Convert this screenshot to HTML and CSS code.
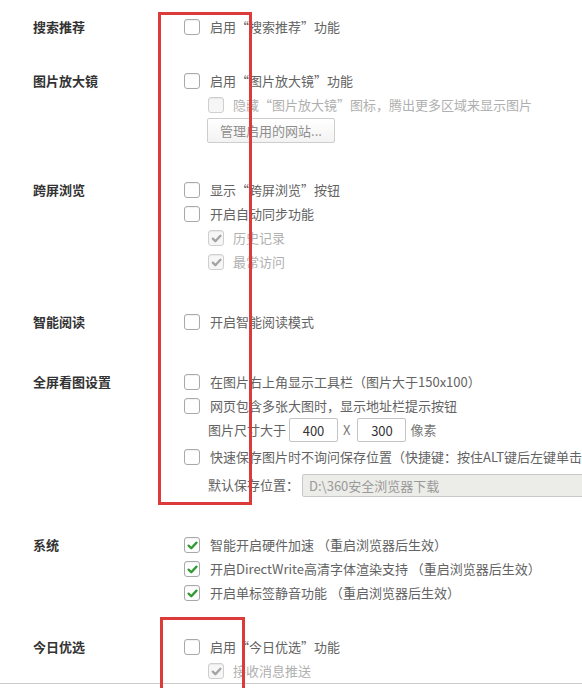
FILE: index.html
```html
<!DOCTYPE html>
<html lang="zh-CN">
<head>
<meta charset="utf-8">
<title>设置</title>
<link rel="stylesheet" href="styles.css">
</head>
<body>
<div class="page">
  <section class="sec s1">
    <div class="label">搜索推荐</div>
    <div class="opts">
      <div class="row"><span class="cb"></span><span class="txt">启用“搜索推荐”功能</span></div>
    </div>
  </section>

  <section class="sec s2">
    <div class="label">图片放大镜</div>
    <div class="opts">
      <div class="row"><span class="cb"></span><span class="txt">启用“图片放大镜”功能</span></div>
      <div class="row sub"><span class="cb dis"></span><span class="txt dim">隐藏“图片放大镜”图标，腾出更多区域来显示图片</span></div>
      <div class="btnrow"><button class="btn" type="button">管理启用的网站...</button></div>
    </div>
  </section>

  <section class="sec s3">
    <div class="label">跨屏浏览</div>
    <div class="opts">
      <div class="row"><span class="cb"></span><span class="txt">显示“跨屏浏览”按钮</span></div>
      <div class="row"><span class="cb"></span><span class="txt">开启自动同步功能</span></div>
      <div class="row sub"><span class="cb dis"><svg viewBox="0 0 15 15"><path class="ck grey" d="M3.8 7.6 L6.4 10.2 L11.4 4.8"/></svg></span><span class="txt dim">历史记录</span></div>
      <div class="row sub"><span class="cb dis"><svg viewBox="0 0 15 15"><path class="ck grey" d="M3.8 7.6 L6.4 10.2 L11.4 4.8"/></svg></span><span class="txt dim">最常访问</span></div>
    </div>
  </section>

  <section class="sec s4">
    <div class="label">智能阅读</div>
    <div class="opts">
      <div class="row"><span class="cb"></span><span class="txt">开启智能阅读模式</span></div>
    </div>
  </section>

  <section class="sec s5">
    <div class="label">全屏看图设置</div>
    <div class="opts">
      <div class="row"><span class="cb"></span><span class="txt">在图片右上角显示工具栏（图片大于150x100）</span></div>
      <div class="row"><span class="cb"></span><span class="txt">网页包含多张大图时，显示地址栏提示按钮</span></div>
      <div class="row field sub-text">
        <span class="txt">图片尺寸大于</span>
        <input class="num" type="text" value="400">
        <span class="txt times">X</span>
        <input class="num" type="text" value="300">
        <span class="txt unit">像素</span>
      </div>
      <div class="row gap3"><span class="cb"></span><span class="txt">快速保存图片时不询问保存位置（快捷键：按住ALT键后左键单击图片）</span></div>
      <div class="row field gap4 sub-text">
        <span class="txt">默认保存位置：</span>
        <input class="path" type="text" value="D:\360安全浏览器下载" disabled>
      </div>
    </div>
  </section>

  <section class="sec s6">
    <div class="label">系统</div>
    <div class="opts">
      <div class="row"><span class="cb"><svg viewBox="0 0 15 15"><path class="ck green" d="M3.6 7.6 L6.3 10.3 L11.5 4.6"/></svg></span><span class="txt">智能开启硬件加速 （重启浏览器后生效）</span></div>
      <div class="row"><span class="cb"><svg viewBox="0 0 15 15"><path class="ck green" d="M3.6 7.6 L6.3 10.3 L11.5 4.6"/></svg></span><span class="txt">开启DirectWrite高清字体渲染支持 （重启浏览器后生效）</span></div>
      <div class="row"><span class="cb"><svg viewBox="0 0 15 15"><path class="ck green" d="M3.6 7.6 L6.3 10.3 L11.5 4.6"/></svg></span><span class="txt">开启单标签静音功能 （重启浏览器后生效）</span></div>
    </div>
  </section>

  <section class="sec s7">
    <div class="label">今日优选</div>
    <div class="opts">
      <div class="row"><span class="cb"></span><span class="txt">启用“今日优选”功能</span></div>
      <div class="row sub"><span class="cb dis"><svg viewBox="0 0 15 15"><path class="ck grey" d="M3.8 7.6 L6.4 10.2 L11.4 4.8"/></svg></span><span class="txt dim">接收消息推送</span></div>
    </div>
  </section>

  <div class="rule"></div>

  <div class="mark mark1"></div>
  <div class="mark mark2"></div>
</div>
</body>
</html>
```

FILE: styles.css
```css
html, body {
  margin: 0;
  padding: 0;
  background: #ffffff;
}

body {
  font-family: "Noto Sans CJK SC", "Microsoft YaHei", "Noto Sans", sans-serif;
  font-size: 13px;
  color: #636363;
  overflow: hidden;
}

.page {
  position: relative;
  width: 582px;
  height: 688px;
  overflow: hidden;
}

.sec {
  display: grid;
  grid-template-columns: 151px auto;
  padding-left: 33px;
}

.s1 { padding-top: 15px; }
.s2 { margin-top: 30px; }
.s3 { margin-top: 35px; }
.s4 { margin-top: 36px; }
.s5 { margin-top: 36px; }
.s6 { margin-top: 36px; }
.s7 { margin-top: 30px; }

.label {
  font-weight: bold;
  color: #333333;
  line-height: 24px;
  height: 24px;
  white-space: nowrap;
}

.opts {
  display: flex;
  flex-direction: column;
}

.row {
  display: flex;
  align-items: center;
  height: 24px;
  white-space: nowrap;
}

.row.sub {
  padding-left: 24px;
}

.row.sub-text {
  padding-left: 24px;
}

.row.gap3 { margin-top: 3px; }
.row.gap4 { margin-top: 4px; }

.cb {
  flex: none;
  box-sizing: border-box;
  width: 16px;
  height: 16px;
  border: 1px solid #a9a9a9;
  border-radius: 3px;
  background: #ffffff;
  box-shadow: inset 0 1px 1px rgba(0, 0, 0, 0.06);
  margin-right: 10px;
  display: flex;
  align-items: center;
  justify-content: center;
}

.cb.dis {
  border-color: #cfcfcf;
  background: #f6f6f6;
  margin-right: 9px;
}

.cb svg {
  width: 15px;
  height: 15px;
  flex: none;
}

.ck {
  fill: none;
  stroke-width: 2.3;
  stroke-linecap: round;
  stroke-linejoin: round;
}

.ck.green { stroke: #2e9c33; }
.ck.grey { stroke: #a3a3a3; }

.txt {
  line-height: 24px;
}

.txt.dim {
  color: #b0b0b0;
}

.btnrow {
  margin-top: 1px;
  padding-left: 23px;
}

.btn {
  box-sizing: border-box;
  height: 25px;
  width: 128px;
  padding: 0;
  border: 1px solid #cdcdcd;
  border-radius: 2px;
  background: linear-gradient(#ffffff, #f3f3f3);
  font-family: inherit;
  font-size: 13px;
  color: #8e8e8e;
  text-align: center;
}

.num {
  box-sizing: border-box;
  width: 49px;
  height: 24px;
  margin-left: 3px;
  padding: 0;
  border: 1px solid #c4c4c4;
  border-radius: 2px;
  font-family: inherit;
  font-size: 13px;
  color: #333333;
  text-align: center;
  background: #ffffff;
}

.times {
  margin: 0 4px 0 5px;
  color: #777777;
}

.unit {
  margin-left: 4px;
  color: #777777;
}

.path {
  box-sizing: border-box;
  width: 300px;
  height: 23px;
  margin-left: 3px;
  padding: 0 6px;
  border: 1px solid #c8c8c8;
  border-radius: 2px;
  background: #ececE8;
  font-family: inherit;
  font-size: 13px;
  color: #9a9a9a;
}

.rule {
  margin-top: 0;
  height: 1px;
  background: #cccccc;
}

.mark {
  position: absolute;
  box-sizing: border-box;
  border: 3px solid #dd3a3a;
  pointer-events: none;
}

.mark1 {
  left: 158px;
  top: 12px;
  width: 94px;
  height: 493px;
}

.mark2 {
  left: 160px;
  top: 617px;
  width: 85px;
  height: 90px;
}
```
